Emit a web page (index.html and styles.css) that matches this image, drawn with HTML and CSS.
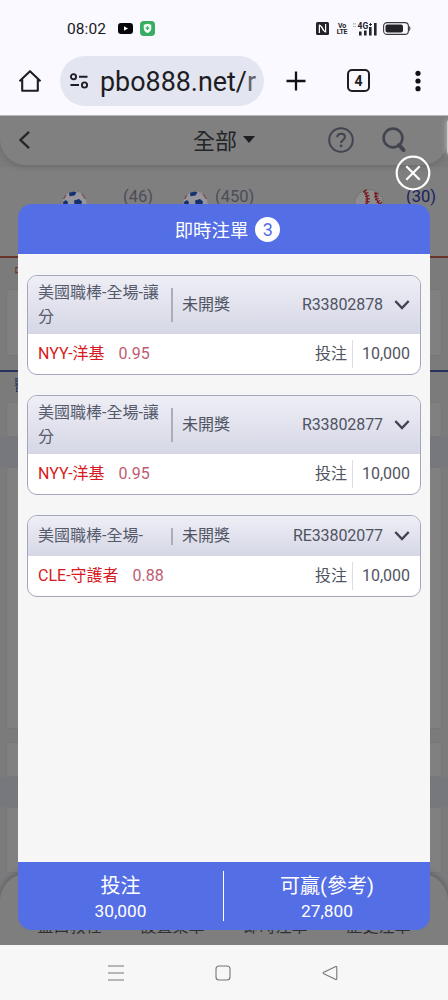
FILE: index.html
```html
<!DOCTYPE html>
<html lang="zh-Hant">
<head>
<meta charset="utf-8">
<title>即時注單</title>
<link rel="stylesheet" href="styles.css">
</head>
<body>
<div class="phone">
  <div class="status">
    <span class="clock">08:02</span>
    <svg class="st-video" width="15" height="11" viewBox="0 0 15 11"><rect width="15" height="11" rx="3" fill="#08080c"/><path d="M6 3.3 10 5.5 6 7.7z" fill="#fff"/></svg>
    <svg class="st-shield" width="15" height="15" viewBox="0 0 16 16"><rect width="16" height="16" rx="4" fill="#3bad62"/><path d="M8 2.8 12 4v4c0 2.4-1.700 3.900-4 5-2.300-1.100-4-2.600-4-5V4z" fill="#f2fff5"/><path d="M8 5.5v4M6 7.5h4" stroke="#3bad62" stroke-width="1.4"/></svg>
    <svg class="st-nfc" width="13" height="13" viewBox="0 0 13 13"><rect width="13" height="13" rx="1.500" fill="#242428"/><path d="M3.400 11V3.200c1.800 0 2.400 3 4.200 5.500M9.600 2v7.800C7.800 9.800 7.200 6.800 5.400 4.300" fill="none" stroke="#fff" stroke-width="1.2"/></svg>
    <span class="volte"><span>Vo</span><span>LTE</span></span>
    <svg class="st-signal" width="25" height="14" viewBox="0 0 25 14"><path d="M1 1.8h3M1 4.5h3" stroke="#aaa" stroke-width="1.2" stroke-dasharray="1.2 .6"/><g fill="#242428"><rect x="7" y="9.500" width="2.600" height="4"/><rect x="12" y="8.500" width="2.600" height="5"/><rect x="17" y="5" width="2.600" height="8.500"/><rect x="22" y="1" width="2.600" height="12.500"/></g><text x="5.500" y="7.200" font-size="8.500" font-weight="700" fill="#242428" font-family="Roboto, sans-serif">4G</text><path d="M17 2.500h3M18.500 1v3" stroke="#242428"/></svg>
    <svg class="st-battery" width="28" height="13" viewBox="0 0 28 13"><rect x=".6" y=".6" width="24.800" height="11.800" rx="3.500" fill="none" stroke="#38383c" stroke-width="1.100"/><rect x="2.500" y="2.400" width="17.500" height="8.200" rx="2" fill="#242428"/><path d="M26.200 4v5c1.600-.6 1.600-4.400 0-5z" fill="#38383c"/></svg>
  </div>
  <div class="browser">
    <svg class="home" width="24" height="24" viewBox="0 0 24 24"><path d="M4.200 10.500V21.700h15.600V10.500M1.500 12.300 12 2.200l10.500 10.100" fill="none" stroke="#1d1d22" stroke-width="2.100" stroke-linejoin="round"/></svg>
    <div class="address">
      <svg width="20" height="16" viewBox="0 0 20 16"><g fill="none" stroke="#1d1d22" stroke-width="1.900"><circle cx="4.500" cy="3.700" r="2.600"/><circle cx="15.500" cy="12" r="2.600"/><path d="M10 3.700h8.500M1.500 12h8.500"/></g></svg>
      <span class="url">pbo888.net/<span class="path">r</span></span>
    </div>
    <svg class="plus" width="20" height="20" viewBox="0 0 20 20"><path d="M10 .5v19M.5 10h19" stroke="#111116" stroke-width="2.300"/></svg>
    <span class="tabs">4</span>
    <svg class="more" width="6" height="22" viewBox="0 0 6 22"><g fill="#111116"><circle cx="3" cy="3.300" r="2.600"/><circle cx="3" cy="11" r="2.600"/><circle cx="3" cy="18.700" r="2.600"/></g></svg>
  </div>

  <main class="page">
    <div class="topbar">
      <svg class="back" width="12" height="20" viewBox="0 0 12 20"><path d="M10 1.800 1.500 10l8.500 8.200" fill="none" stroke="#26262a" stroke-width="2.300"/></svg>
      <span class="filter">全部</span>
      <svg class="caret" width="12" height="7" viewBox="0 0 12 7"><path d="M0 0h12L6 7z" fill="#1d1e22"/></svg>
      <svg class="help" width="26" height="26" viewBox="0 0 26 26"><circle cx="13" cy="13" r="11.800" fill="none" stroke="#42444f" stroke-width="2"/><path d="M9.300 10.300c.2-4.800 7.600-4.600 7.600-.2 0 3-3.800 2.900-3.800 6" fill="none" stroke="#42444f" stroke-width="2.100"/><circle cx="13.100" cy="18.900" r="1.400" fill="#42444f"/></svg>
      <svg class="search" width="24" height="27" viewBox="0 0 24 27"><circle cx="11" cy="12" r="9.400" fill="none" stroke="#42444f" stroke-width="2.600"/><path d="m17 19 4.500 5" stroke="#42444f" stroke-width="4" stroke-linecap="round"/></svg>
      <i class="glow"></i>
    </div>
    <div class="sports">
      <svg class="ball b1" width="25" height="25" viewBox="0 0 25 25"><circle cx="12.500" cy="12.500" r="12" fill="#97969c"/><path d="M7 1.800 12 .5l2.500 1-2 3-5 .8zM12 9.500l5-1.500 3 2.500-1 5-6 1zM1 11l3-2 2 2-1 5-3 1z" fill="#16306f"/><path d="M1.500 8 4 4.200M20 3l3.500 5" stroke="#7c4a45" stroke-width="1.300"/></svg>
      <span class="n n1">(46)</span>
      <svg class="ball b2" width="25" height="25" viewBox="0 0 25 25"><circle cx="12.500" cy="12.500" r="12" fill="#97969c"/><path d="M7 1.800 12 .5l2.500 1-2 3-5 .8zM12 9.500l5-1.500 3 2.500-1 5-6 1zM1 11l3-2 2 2-1 5-3 1z" fill="#16306f"/><path d="M1.500 8 4 4.200M20 3l3.500 5" stroke="#7c4a45" stroke-width="1.300"/></svg>
      <span class="n n2">(450)</span>
      <svg class="ball b3" width="30" height="30" viewBox="0 0 30 30"><circle cx="15" cy="15" r="14.500" fill="#8e8d8e" stroke="#747374"/><path d="M10 1.500c4 5 4 12 1 18M22 3c-1 5 1 10 5 13" fill="none" stroke="#7c1c22" stroke-width="1.500"/><path d="M10.500 1.500c4 5 4 12 1 18M22.500 4c-1 4 1 8 4.500 11" fill="none" stroke="#7c1c22" stroke-width="4.500" stroke-dasharray="1.200 1.600"/></svg>
      <span class="n n3">(30)</span>
    </div>
    <div class="section red"><span>中</span></div>
    <div class="panel p1"></div>
    <div class="section blue"><span>醫</span></div>
    <div class="panel p2"></div>
    <div class="band"></div>
    <div class="panel p3"></div>
    <div class="panel p4"></div>
    <div class="band"></div>
    <div class="panel p5"></div>
    <div class="dock"><span>盤口教程</span><span>設置菜單</span><span>即時注單</span><span>歷史注單</span></div>

    <section class="modal">
      <header class="modal-head">即時注單<span class="count">3</span></header>
      <div class="modal-body">
        <article class="bet">
          <div class="bet-head"><span class="league">美國職棒-全場-讓分</span><i class="bar"></i><span class="state">未開獎</span><span class="ticket">R33802878</span><svg width="16" height="11" viewBox="0 0 16 11"><path d="m1.300 1 6.700 7 6.700-7" fill="none" stroke="#3f4352" stroke-width="2.400"/></svg></div>
          <div class="bet-row"><span class="team">NYY-洋基</span><span class="odds">0.95</span><span class="label">投注</span><span class="stake">10,000</span></div>
        </article>
        <article class="bet">
          <div class="bet-head"><span class="league">美國職棒-全場-讓分</span><i class="bar"></i><span class="state">未開獎</span><span class="ticket">R33802877</span><svg width="16" height="11" viewBox="0 0 16 11"><path d="m1.300 1 6.700 7 6.700-7" fill="none" stroke="#3f4352" stroke-width="2.400"/></svg></div>
          <div class="bet-row"><span class="team">NYY-洋基</span><span class="odds">0.95</span><span class="label">投注</span><span class="stake">10,000</span></div>
        </article>
        <article class="bet short">
          <div class="bet-head"><span class="league">美國職棒-全場-</span><i class="bar"></i><span class="state">未開獎</span><span class="ticket">RE33802077</span><svg width="16" height="11" viewBox="0 0 16 11"><path d="m1.300 1 6.700 7 6.700-7" fill="none" stroke="#3f4352" stroke-width="2.400"/></svg></div>
          <div class="bet-row"><span class="team">CLE-守護者</span><span class="odds">0.88</span><span class="label">投注</span><span class="stake">10,000</span></div>
        </article>
      </div>
      <footer class="modal-foot">
        <div class="sum"><span class="sum-label">投注</span><span class="sum-value">30,000</span></div>
        <div class="sum"><span class="sum-label">可贏(參考)</span><span class="sum-value">27,800</span></div>
      </footer>
      <svg class="close" width="36" height="36" viewBox="0 0 36 36"><circle cx="18" cy="18" r="16.300" fill="none" stroke="#fff" stroke-width="2.200"/><path d="m11.300 11.300 13.400 13.400M24.700 11.300 11.300 24.700" stroke="#fff" stroke-width="2.200"/></svg>
    </section>
  </main>

  <nav class="system">
    <svg width="16" height="16" viewBox="0 0 16 16"><path d="M0 1h16M0 8h16M0 15h16" stroke="#77777a" stroke-width="1.100"/></svg>
    <svg width="16" height="16" viewBox="0 0 16 16"><rect x="1" y="1" width="14" height="14" rx="3" fill="none" stroke="#77777a" stroke-width="1.100"/></svg>
    <svg width="16" height="16" viewBox="0 0 16 16"><path d="M13.800 1.500 1.800 7.200q-1.200.8 0 1.600l12 5.700q1 .3 1-.8V2.300q0-1.100-1-.8z" fill="none" stroke="#77777a" stroke-width="1.100"/></svg>
  </nav>
</div>
</body>
</html>
```
FILE: styles.css
```css
* { box-sizing: border-box; }
body { margin: 0; font-family: Roboto, "Noto Sans CJK TC", sans-serif; }
svg { display: block; flex: none; }
.phone { width: 448px; height: 1000px; display: flex; flex-direction: column; overflow: hidden; background: #faf9ff; }

.status { height: 53px; padding: 4px 0 0 67px; display: flex; align-items: center; flex: none; }
.clock { width: 39px; font-size: 15.500px; letter-spacing: .1px; color: #18181c; white-space: nowrap; }
.st-video { margin-left: 12px; }
.st-shield { margin-left: 7px; }
.st-nfc { margin-left: 161px; }
.volte { margin-left: 8px; width: 10px; display: flex; flex-direction: column; align-items: center; font-size: 7px; line-height: 6px; font-weight: 700; letter-spacing: -.3px; color: #242428; }
.st-signal { margin-left: 5px; }
.st-battery { margin-left: 6px; }

.browser { height: 63px; padding: 0 27px 7px 18px; display: flex; align-items: center; flex: none; border-bottom: 1px solid #b7b7bb; }
.address { width: 204px; height: 50px; margin-left: 18px; padding: 0 9px; border-radius: 25px; background: #e3e5f1; display: flex; align-items: center; }
.url { width: 157px; margin-left: 11px; font-size: 26.900px; line-height: 40px; color: #1d1d22; white-space: nowrap; padding-top: 2px; }
.path { color: #65666e; }
.plus { margin-left: 22px; }
.tabs { width: 23px; height: 23px; margin-left: 41px; border: 2.300px solid #1d1d22; border-radius: 5px; font-size: 14px; line-height: 20px; font-weight: 700; text-align: center; color: #1d1d22; }
.more { margin-left: auto; }

.page { position: relative; height: 829px; flex: none; background: #7b7b7b; overflow: hidden; display: flex; flex-direction: column; }
.topbar { position: relative; height: 49px; flex: none; background: #808080; border-radius: 0 0 26px 26px; box-shadow: 0 2px 6px #6b6b6b; display: flex; align-items: center; padding: 0 0 2px 19px; }
.glow { position: absolute; right: -4px; top: 4px; width: 5px; height: 34px; border-radius: 4px; background: #ccc; box-shadow: 0 0 5px #c4c4c4; }
.filter { margin-left: 162px; font-size: 22px; line-height: 30px; padding-top: 4px; color: #242529; }
.caret { margin-left: 6px; }
.help { margin-left: 73px; }
.search { margin-left: 28px; }
.sports { height: 91px; flex: none; margin-top: 2px; padding-top: 18px; background: #7f7f7f; display: flex; align-items: flex-start; }
.ball { margin-top: 6px; }
.b1 { margin-left: 62px; }
.n { font-size: 16.500px; line-height: 24px; color: #4b4d58; }
.n1 { margin-left: 36px; width: 32px; }
.b2 { margin-left: 28px; }
.n2 { margin-left: 7px; width: 39px; }
.b3 { margin: 4px 0 0 100px; }
.n3 { margin-left: 22px; color: #19205f; }
.section { flex: none; height: 31px; padding-left: 14px; font-size: 14px; line-height: 26px; }
.red { border-top: 2px solid #6a342b; color: #6a342b; margin-top: -2px; margin-bottom: 2px; }
.blue { border-top: 2px solid #27325f; color: #27325f; margin-top: 14px; height: 32px; }
.panel { flex: none; margin: 0 6px; border: 1px solid #777; background: #808080; border-radius: 3px; }
.p1 { height: 67px; }
.p2 { height: 35px; }
.band { height: 30px; flex: none; background: #76787d; }
.p3 { height: 262px; margin-bottom: 13px; }
.p4 { height: 35px; }
.p5 { height: 66px; }
.dock { flex: none; height: 73px; border-radius: 28px 28px 0 0; background: #7e7e7e; box-shadow: 0 -2px 5px #5c5c66; padding: 42px 18px 0; display: flex; justify-content: space-around; font-size: 16px; line-height: 24px; color: #303136; position: relative; z-index: 1; }

.modal { position: absolute; z-index: 2; left: 18px; top: 88px; width: 412px; height: 726px; display: flex; flex-direction: column; }
.modal-head { height: 50px; flex: none; background: #546ee5; border-radius: 14px 14px 0 0; color: #fff; font-size: 18.400px; display: flex; align-items: center; justify-content: center; gap: 7px; padding-left: 7px; }
.count { width: 25px; height: 25px; border-radius: 50%; background: #fff; color: #546ee5; font-size: 18px; line-height: 26px; text-align: center; }
.modal-body { flex: 1; background: #f6f6f7; padding: 21px 9px 0; display: flex; flex-direction: column; gap: 20px; }
.bet { height: 100px; border: 1px solid #a4a6bf; border-radius: 10px; background: #fff; overflow: hidden; display: flex; flex-direction: column; font-size: 16px; line-height: 24px; color: #505462; }
.bet-head { height: 58px; flex: none; padding: 0 10px; display: flex; align-items: center; background: linear-gradient(#eeeef6, #d5d7e5); }
.league { width: 124px; color: #555a6b; }
.bar { width: 2px; height: 34px; margin: 0 9px; background: #abadb9; }
.ticket { margin-left: auto; margin-right: 11px; letter-spacing: -.08px; }
.bet-row { flex: 1; padding: 0 10px 1px; display: flex; align-items: center; }
.team { color: #d61a22; }
.odds { margin-left: 14px; color: #be5d70; }
.label { margin-left: auto; margin-right: 5px; }
.stake { border-left: 1px solid #dcdcea; padding-left: 9px; line-height: 28px; }
.short { height: 82px; }
.short .bet-head { height: 40px; }
.short .bar { height: 17px; }
.modal-foot { height: 68px; flex: none; background: #546ee5; border-radius: 0 0 14px 14px; color: #fff; display: flex; padding: 9px 0; }
.sum { width: 205px; flex: none; display: flex; flex-direction: column; align-items: center; padding-top: 1px; }
.sum + .sum { width: 207px; border-left: 1px solid #fff; }
.sum-label { font-size: 20px; line-height: 28px; }
.sum-value { font-size: 17.300px; line-height: 22px; }
.close { position: absolute; left: 377px; top: -49px; }

.system { flex: 1; background: #f7f7f8; display: flex; justify-content: center; align-items: center; gap: 91px; padding-right: 2px; }
```
